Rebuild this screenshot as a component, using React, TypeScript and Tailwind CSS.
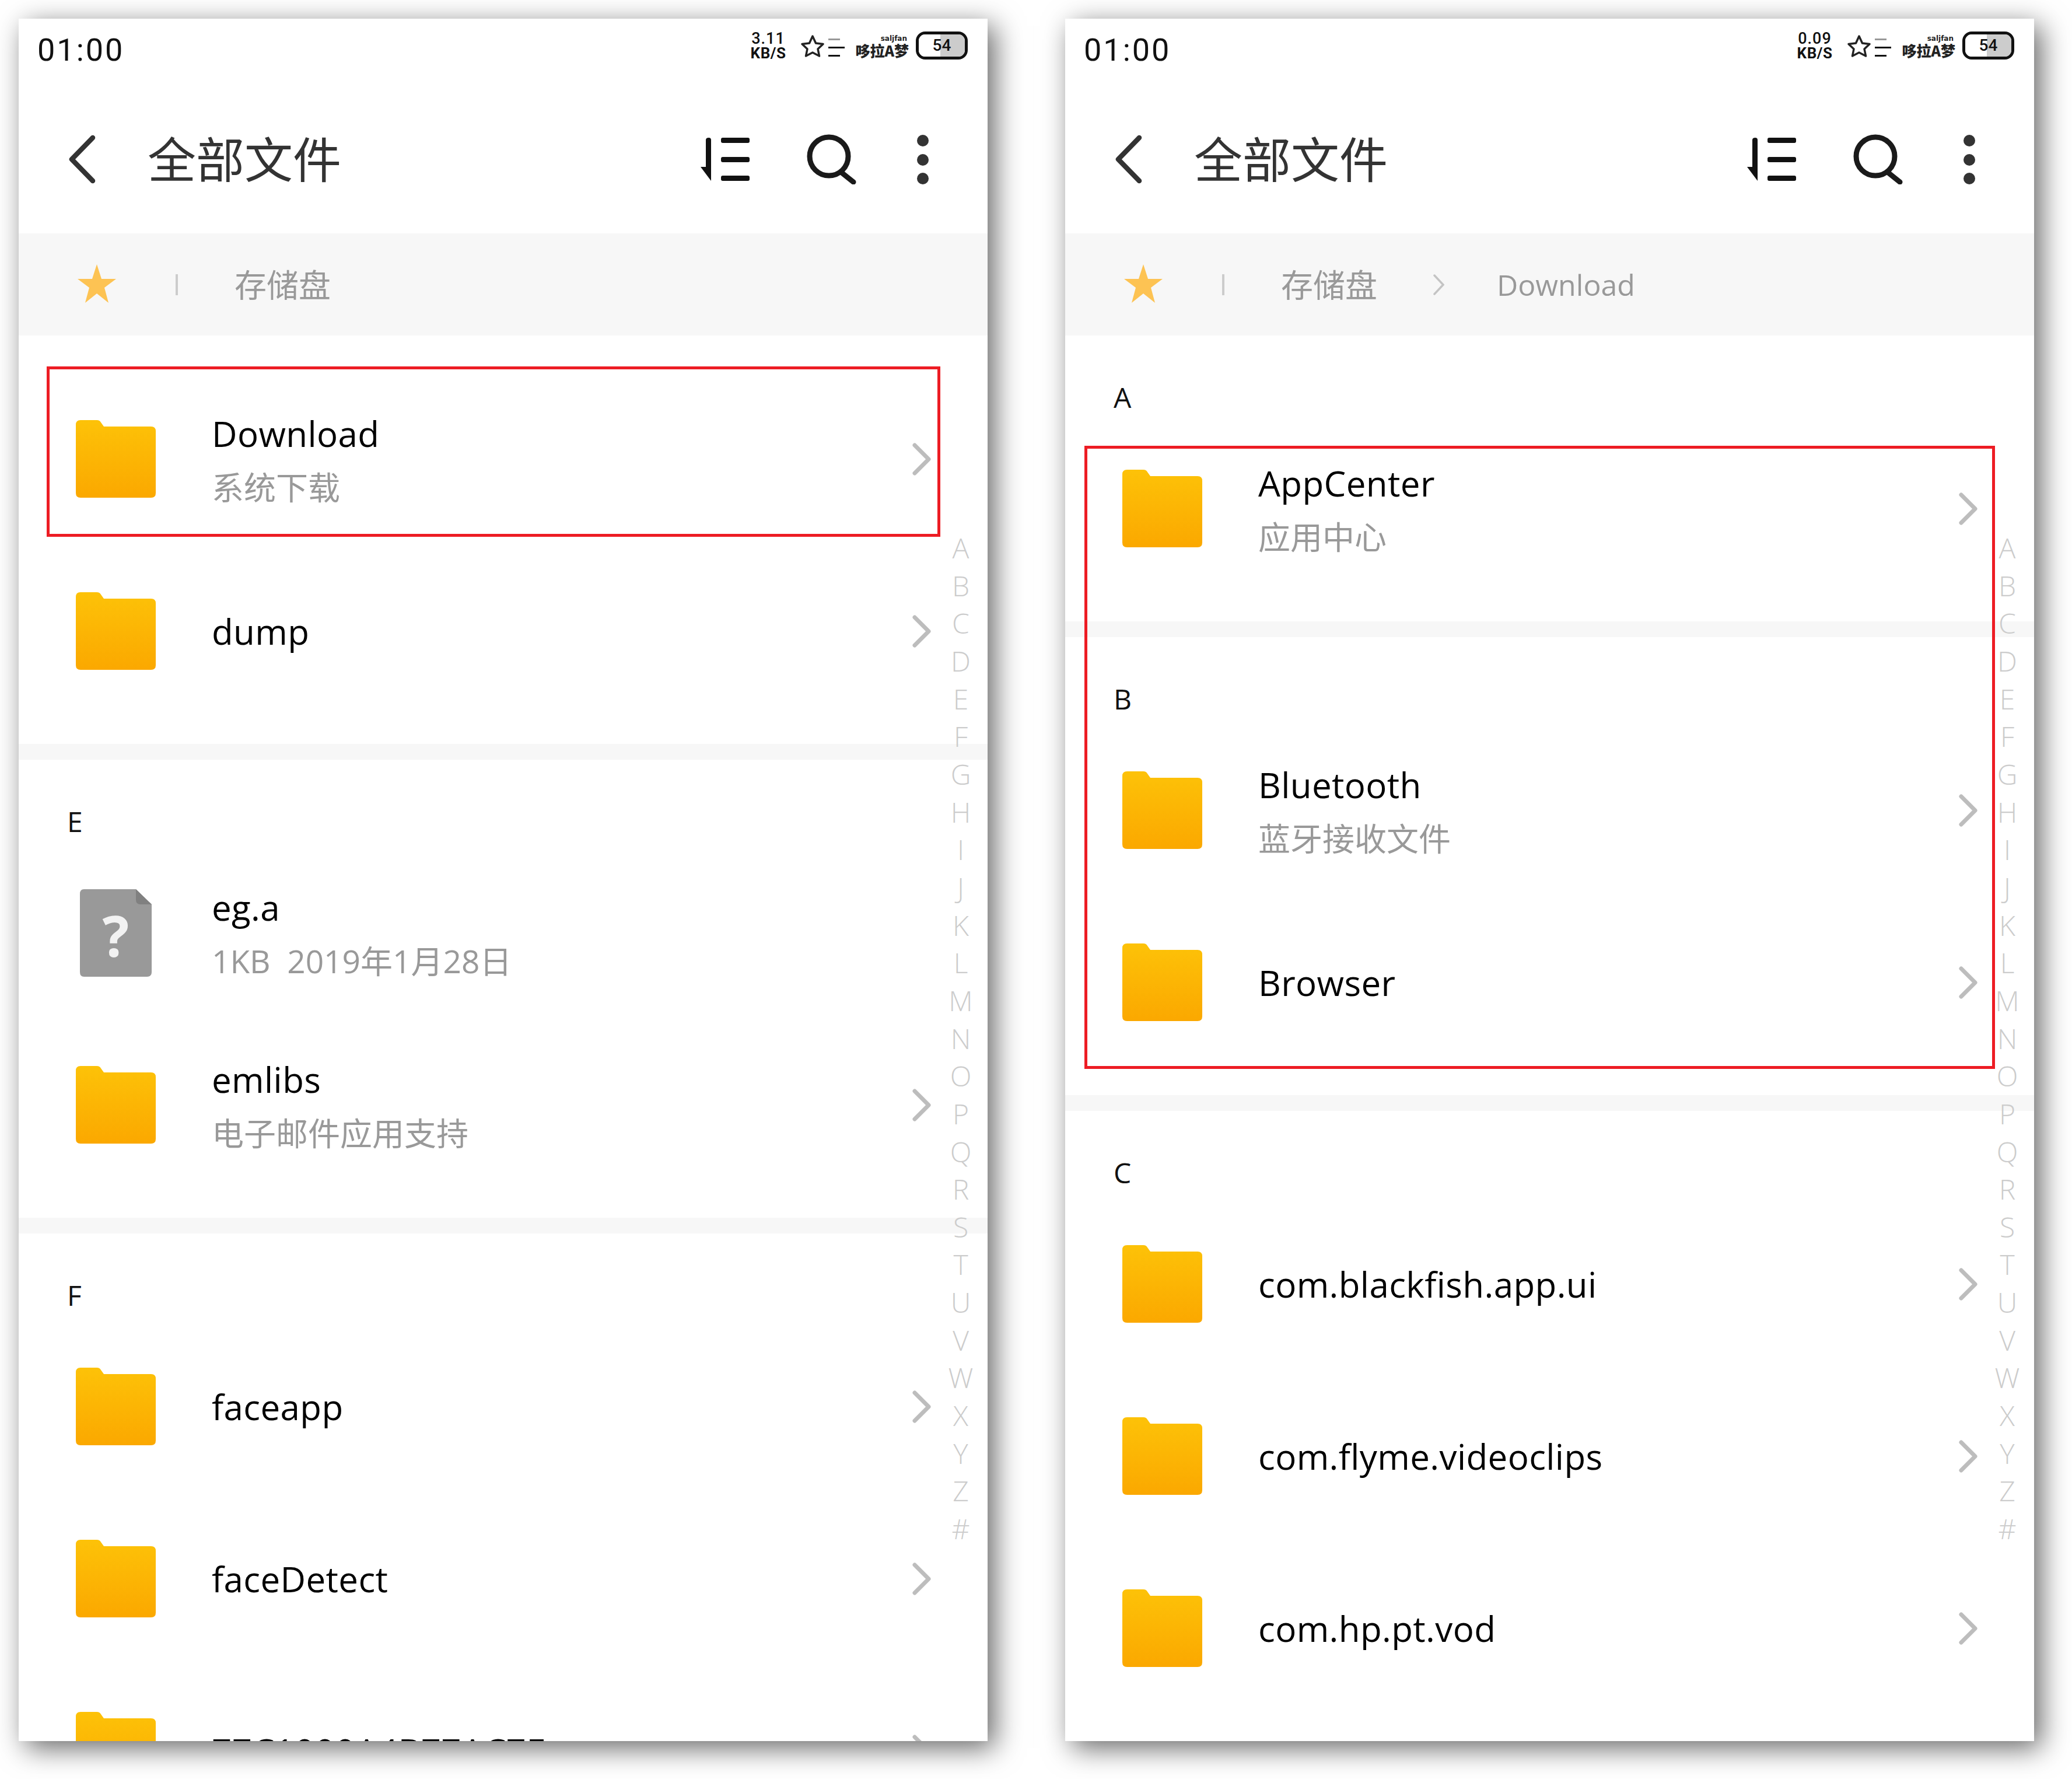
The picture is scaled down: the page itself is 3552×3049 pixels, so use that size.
import React from 'react';

type Entry = { name: string; sub?: string; kind?: 'file' };
type Section = { letter?: string; rows: Entry[]; last?: boolean };

const LETTERS = 'ABCDEFGHIJKLMNOPQRSTUVWXYZ#'.split('');

const leftSections: Section[] = [
    { rows: [{ name: 'Download', sub: '系统下载' }, { name: 'dump' }] },
    {
        letter: 'E',
        rows: [
            { name: 'eg.a', sub: '1KB  2019年1月28日', kind: 'file' },
            { name: 'emlibs', sub: '电子邮件应用支持' },
        ],
    },
    {
        letter: 'F',
        rows: [{ name: 'faceapp' }, { name: 'faceDetect' }, { name: '77C1000A4B77AC7E' }],
        last: true,
    },
];

const rightSections: Section[] = [
    { letter: 'A', rows: [{ name: 'AppCenter', sub: '应用中心' }] },
    { letter: 'B', rows: [{ name: 'Bluetooth', sub: '蓝牙接收文件' }, { name: 'Browser' }] },
    {
        letter: 'C',
        rows: [{ name: 'com.blackfish.app.ui' }, { name: 'com.flyme.videoclips' }, { name: 'com.hp.pt.vod' }],
        last: true,
    },
];

const FolderIcon: React.FC = () => (
    <svg viewBox="0 0 137 133" className="w-[137px] h-[133px] shrink-0">
        <defs>
            <linearGradient id="folderFill" x1="0" y1="0" x2="0" y2="1">
                <stop offset="0" stopColor="#fdc208" />
                <stop offset="1" stopColor="#fba800" />
            </linearGradient>
        </defs>
        <path
            d="M8 0H36Q41 0 43 4L48 11H129Q137 11 137 19V125Q137 133 129 133H8Q0 133 0 125V8Q0 0 8 0Z"
            fill="url(#folderFill)"
        />
    </svg>
);

const FileIcon: React.FC = () => (
    <svg viewBox="0 0 137 160" className="w-[137px] h-[160px] shrink-0">
        <path d="M14 5H103L130 31V147Q130 155 122 155H14Q7 155 7 147V13Q7 5 14 5Z" fill="#999999" />
        <path d="M103 5L130 31H111Q103 31 103 23Z" fill="#808080" />
        <text x="68.500" y="121" textAnchor="middle" fontSize="96" fontWeight="700" fill="#f2f2f2" fontFamily="Open Sans, sans-serif">
            ?
        </text>
    </svg>
);

const Row: React.FC<{ entry: Entry }> = ({ entry }) => (
    <div className="h-[295px] flex items-center pl-[98px] pr-[97px]">
        {entry.kind === 'file' ? <FileIcon /> : <FolderIcon />}
        <div className="ml-[96px] flex-1 min-w-0">
            <div className="text-[60px] leading-[80px] tracking-[0.4px] text-[#000] whitespace-nowrap">{entry.name}</div>
            {entry.sub && <div className="text-[55px] leading-[72px] mt-[16px] text-[#999] whitespace-pre">{entry.sub}</div>}
        </div>
        {entry.kind !== 'file' && (
            <svg viewBox="0 0 32 56" className="w-[32px] h-[56px] shrink-0" fill="none" stroke="#bdbdbd" strokeWidth="7" strokeLinecap="round" strokeLinejoin="round">
                <path d="M4 4L28 28L4 52" />
            </svg>
        )}
    </div>
);

const SectionBlock: React.FC<{ section: Section }> = ({ section }) => (
    <div>
        {section.letter ? (
            <div className="h-[149px] pl-[83px] pt-[80px] text-[48px] leading-[52px] text-[#111]">{section.letter}</div>
        ) : (
            <div className="h-[64px]" />
        )}
        {section.rows.map((r) => (
            <Row key={r.name} entry={r} />
        ))}
        {!section.last && (
            <>
                <div className="h-[46px]" />
                <div className="h-[27px] bg-[#f7f7f7]" />
            </>
        )}
    </div>
);

const StatusBar: React.FC<{ speed: string }> = ({ speed }) => (
    <div className="h-[114px] flex items-start pl-[32px] pr-[34px] pt-[24px]">
        <div className="text-[54px] leading-[60px] tracking-[3px] text-[#111] font-['Roboto']">01:00</div>
        <div className="ml-auto flex items-start -mt-[2px]">
            <div className="flex flex-col items-center w-[66px] font-['Roboto'] text-[#111]">
                <span className="text-[27px] leading-[25px] font-medium tracking-[1px]">{speed}</span>
                <span className="text-[26px] leading-[24px] font-bold tracking-[0.5px]">KB/S</span>
            </div>
            <svg viewBox="0 0 42 40" className="w-[42px] h-[40px] ml-[22px] mt-[5px]" fill="none" stroke="#222" strokeWidth="3.5" strokeLinejoin="round">
                <path d="M21 3L26.5 15L39 16.5L30 25L32.5 37L21 31L9.500 37L12 25L3 16.5L15.500 15Z" />
            </svg>
            <div className="ml-[6px] mt-[12px] w-[28px] flex flex-col items-start gap-[11px]">
                <div className="w-[20px] h-[3px] bg-[#999]" />
                <div className="w-[28px] h-[3px] bg-[#111]" />
                <div className="w-[20px] h-[3px] bg-[#111]" />
            </div>
            <div className="ml-[16px] w-[94px] flex flex-col items-end text-[#222]">
                <span className="text-[12px] leading-[14px] mt-[5px] font-bold font-['DejaVu_Sans'] pr-[3px]">saljfan</span>
                <span className="text-[25px] leading-[27px] font-black whitespace-nowrap font-['Noto_Sans_CJK_SC']">哆拉A梦</span>
            </div>
            <div className="ml-[12px] w-[89px] h-[48px] border-[5px] border-[#111] rounded-[16px] overflow-hidden relative flex">
                <div className="w-[37px] bg-white" />
                <div className="flex-1 bg-[#cccccc]" />
                <span className="absolute inset-0 flex items-center justify-center text-[28px] font-medium font-['Roboto'] text-[#111]">54</span>
            </div>
        </div>
    </div>
);

const TitleBar: React.FC = () => (
    <div className="h-[254px] flex items-center">
        <svg viewBox="0 0 48 84" className="w-[48px] h-[84px] ml-[85px]" fill="none" stroke="#333" strokeWidth="8.500" strokeLinecap="round" strokeLinejoin="round">
            <path d="M42 5L6 42L42 79" />
        </svg>
        <div className="ml-[88px] text-[83px] leading-[100px] text-[#333] font-normal">全部文件</div>
        <div className="ml-auto flex items-center">
            <svg viewBox="0 0 84 74" className="w-[84px] h-[74px]" fill="#111">
                <path d="M14 0Q18 0 18 4V74L0 50H9V4Q9 0 14 0Z" />
                <rect x="35" y="0" width="49" height="9" rx="3" />
                <rect x="35" y="33" width="49" height="9" rx="3" />
                <rect x="35" y="65" width="49" height="9" rx="3" />
            </svg>
            <svg viewBox="0 0 86 86" className="w-[86px] h-[86px] ml-[98px]" fill="none" stroke="#1a1a1a" strokeWidth="9" strokeLinecap="round">
                <circle cx="38" cy="38" r="33" />
                <path d="M60 66L80 82" />
            </svg>
            <svg viewBox="0 0 20 86" className="w-[20px] h-[86px] ml-[103px] mr-[101px]" fill="#333">
                <circle cx="10" cy="11" r="10" />
                <circle cx="10" cy="44" r="10" />
                <circle cx="10" cy="76" r="10" />
            </svg>
        </div>
    </div>
);

const Crumbs: React.FC<{ deep?: boolean }> = ({ deep }) => (
    <div className="h-[175px] bg-[#f7f7f7] flex items-center text-[#999]">
        <svg viewBox="0 0 66 66" className="w-[66px] h-[66px] ml-[101px] -mt-[3px]" fill="#fdc353">
            <path d="M33 0L41 25H66L46 40L53 66L33 50L13 66L20 40L0 25H25Z" />
        </svg>
        <div className="ml-[102px] w-[4px] h-[36px] bg-[#cccccc]" />
        <div className="ml-[97px] text-[55px] leading-[70px] font-normal">存储盘</div>
        {deep && (
            <>
                <svg viewBox="0 0 20 40" className="w-[20px] h-[40px] ml-[95px]" fill="none" stroke="#c4c4c4" strokeWidth="3.5" strokeLinecap="round">
                    <path d="M3 4L18 20L3 36" />
                </svg>
                <div className="ml-[90px] text-[50px] leading-[70px]">Download</div>
            </>
        )}
    </div>
);

const Phone: React.FC<{ speed: string; sections: Section[]; deep?: boolean; children?: React.ReactNode }> = ({ speed, sections, deep, children }) => (
    <div className="relative w-[1661px] h-[2952px] bg-white overflow-hidden shadow-[12px_12px_45px_rgba(0,0,0,0.6)] shrink-0">
        <StatusBar speed={speed} />
        <TitleBar />
        <Crumbs deep={deep} />
        {sections.map((s, i) => (
            <SectionBlock key={i} section={s} />
        ))}
        {/* side index */}
        <div className="absolute left-[1582px] top-[875px] w-[66px] flex flex-col items-center text-[48px] leading-[64.650px] text-[#cccccc] font-light">
            {LETTERS.map((l) => (
                <div key={l}>{l}</div>
            ))}
        </div>
        {children}
    </div>
);

export default function App() {
    return (
        <div className="w-[3552px] h-[3049px] bg-white pl-[32px] pt-[32px] flex gap-[133px] font-['Open_Sans','Noto_Sans_CJK_SC',sans-serif] overflow-hidden">
            <Phone speed="3.11" sections={leftSections}>
                <div className="absolute left-[48px] top-[596px] w-[1532px] h-[292px] border-[5px] border-[#ed1c24]" />
            </Phone>
            <Phone speed="0.09" sections={rightSections} deep>
                <div className="absolute left-[33px] top-[732px] w-[1561px] h-[1068px] border-[5px] border-[#ed1c24]" />
            </Phone>
        </div>
    );
}
